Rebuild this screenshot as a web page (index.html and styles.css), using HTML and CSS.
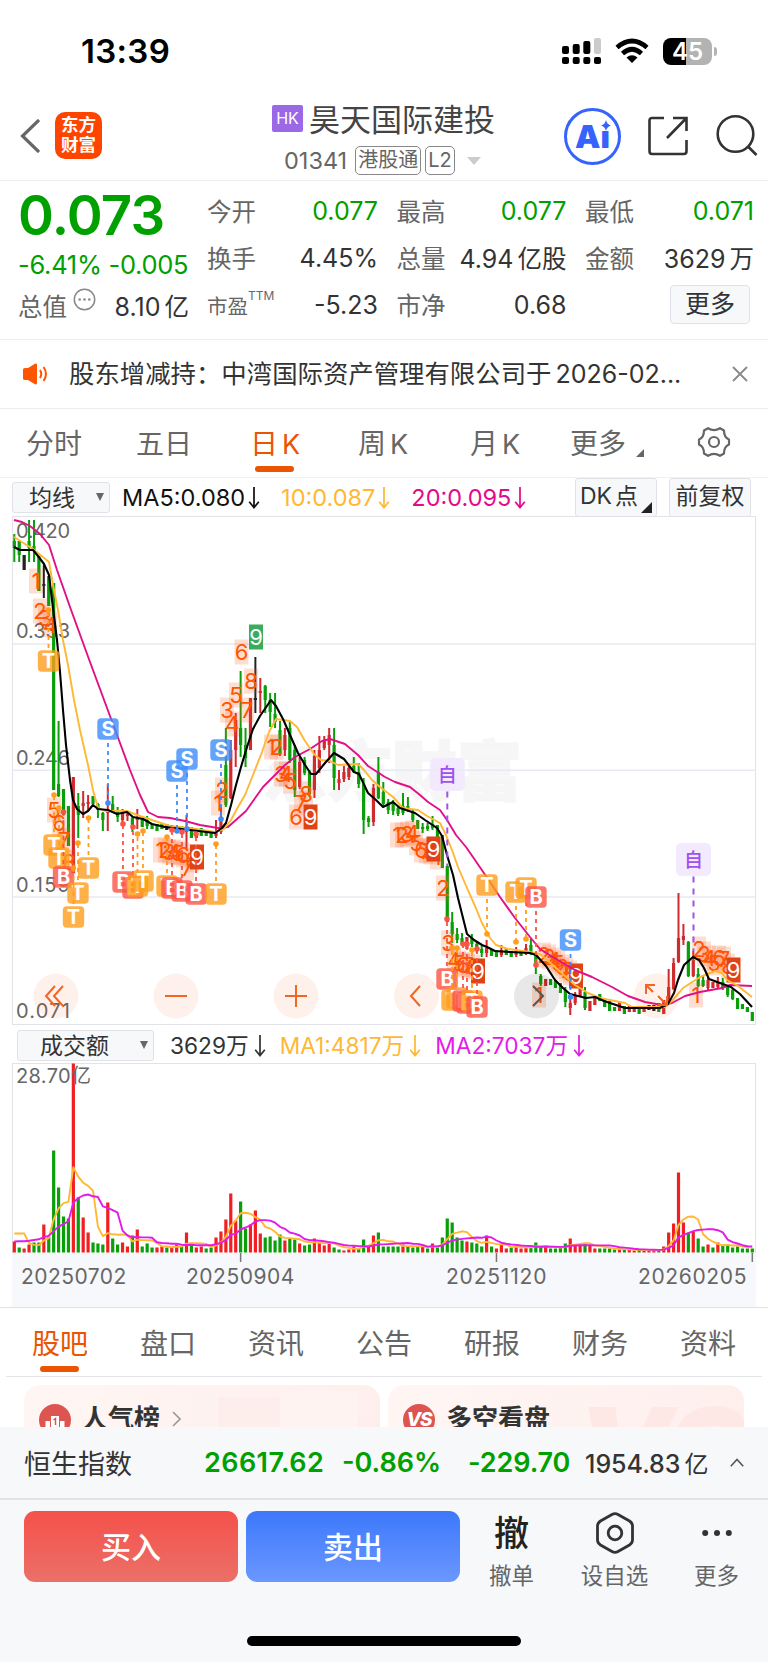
FILE: index.html
```
<!DOCTYPE html>
<html lang="zh-CN">
<head>
  <meta charset="UTF-8" />
  <meta name="viewport" content="width=device-width, initial-scale=1.0"/>
  <title>昊天国际建投 01341</title>
  <link rel="stylesheet" href="styles.css">
</head>
<body>
  <!-- Status bar -->
  <div class="status-bar">
    <div class="clock">13:39</div>
    <div class="status-icons">
      <svg width="39" height="28" viewBox="0 0 39 28">
        <g fill="#000">
          <rect x="0" y="9" width="7" height="8" rx="2"/><rect x="10.7" y="7" width="7" height="10" rx="2"/><rect x="21.3" y="4" width="7" height="13" rx="2"/>
          <rect x="0" y="20" width="7" height="7" rx="2"/><rect x="10.7" y="20" width="7" height="7" rx="2"/><rect x="21.3" y="20" width="7" height="7" rx="2"/><rect x="32" y="20" width="7" height="7" rx="2"/>
        </g>
        <rect x="32" y="1" width="7" height="16" rx="2" fill="#ccc"/>
      </svg>
      <svg width="34" height="26" viewBox="0 0 34 26" fill="none" stroke="#000" stroke-width="4.6">
        <path d="M2 9.500Q17 -3.500 32 9.500"/>
        <path d="M7.500 15.500Q17 7 26.500 15.500"/>
        <path d="M17 25l-5.500-5.500Q17 15 22.500 19.500z" fill="#000" stroke="none"/>
      </svg>
      <div class="battery">45</div>
    </div>
  </div>

  <!-- Header -->
  <div class="header">
    <div class="header-left">
      <svg width="20" height="34" viewBox="0 0 20 34" fill="none" stroke="#666" stroke-width="3.200"><path d="M19 1L2.500 17 19 33"/></svg>
      <div class="logo">东方<br>财富</div>
    </div>
    <div class="title-box">
      <div class="title"><span class="hk">HK</span>昊天国际建投</div>
      <div class="code">01341<span class="tag tag-hk">港股通</span><span class="tag">L2</span><i class="down"></i></div>
    </div>
    <div class="header-right">
      <div class="ai">Ai
        <svg class="spark" width="10" height="11" viewBox="0 0 10 11"><path d="M5 0Q6 4.500 10 5.500 6 6.500 5 11 4 6.500 0 5.500 4 4.500 5 0z" fill="#3563fb"/></svg>
      </div>
      <svg width="42" height="42" viewBox="0 0 42 42" fill="none" stroke="#333" stroke-width="2.600">
        <path d="M17 3H5Q2.500 3 2.500 5.500V36Q2.500 39 5 39H37Q39.500 39 39.500 36V25"/><path d="M26 3H39.500V16M39 3.500L20 23"/>
      </svg>
      <svg width="42" height="42" viewBox="0 0 42 42" fill="none" stroke="#333" stroke-width="2.600"><circle cx="19.500" cy="20" r="17.800"/><path d="M32 32.500L40.500 41"/></svg>
    </div>
  </div>

  <!-- Quote -->
  <div class="quote">
    <div class="price-col">
      <div class="price">0.073</div>
      <div class="change">-6.41% -0.005</div>
      <div class="cap">
        <span class="label">总值</span>
        <svg width="23" height="23" viewBox="0 0 23 23"><circle cx="11.500" cy="11.500" r="10.200" fill="none" stroke="#888" stroke-width="1.500"/><g fill="#888"><circle cx="6.700" cy="11.500" r="1.300"/><circle cx="11.500" cy="11.500" r="1.300"/><circle cx="16.300" cy="11.500" r="1.300"/></g></svg>
        <span class="cap-value">8.10<em>亿</em></span>
      </div>
    </div>
    <div class="stats">
      <div class="stat"><span class="label">今开</span><span class="green">0.077</span></div>
      <div class="stat"><span class="label">最高</span><span class="green">0.077</span></div>
      <div class="stat"><span class="label">最低</span><span class="green">0.071</span></div>
      <div class="stat"><span class="label">换手</span><span>4.45%</span></div>
      <div class="stat"><span class="label">总量</span><span>4.94<em>亿股</em></span></div>
      <div class="stat"><span class="label">金额</span><span>3629<em>万</em></span></div>
      <div class="stat"><span class="label small">市盈<sup>TTM</sup></span><span>-5.23</span></div>
      <div class="stat"><span class="label">市净</span><span>0.68</span></div>
      <div class="stat stat-more"><button class="more-btn">更多</button></div>
    </div>
  </div>

  <!-- Notice -->
  <div class="notice">
    <svg width="27" height="22" viewBox="0 0 27 22"><path d="M1 6.500Q1 5 3 5H6L13 .8Q15 0 15 2V20Q15 22 13 21.200L6 17H3Q1 17 1 15.500z" fill="#ff5500"/><path d="M18 7Q20.500 11 18 15M21.500 4Q26.500 11 21.500 18" fill="none" stroke="#ff5500" stroke-width="2"/></svg>
    <span class="notice-text">股东增减持：中湾国际资产管理有限公司于<b>2026-02...</b></span>
    <svg width="16" height="16" viewBox="0 0 16 16" stroke="#888" stroke-width="1.800"><path d="M1 1L15 15M15 1L1 15"/></svg>
  </div>

  <!-- Period tabs -->
  <div class="period-tabs">
    <span>分时</span><span>五日</span><span class="active">日<b>K</b></span><span>周<b>K</b></span><span>月<b>K</b></span><span class="tab-more">更多</span>
    <svg width="34" height="34" viewBox="0 0 34 34" fill="none" stroke="#666" stroke-width="2.200"><path d="M11 3.200Q17 7 23 3.200L27 5.500Q27 12.500 32 14.500V19.500Q27 21.500 27 28.500L23 30.800Q17 27 11 30.800L7 28.500Q7 21.500 2 19.500V14.500Q7 12.500 7 5.500z" stroke-linejoin="round"/><circle cx="17" cy="17" r="5"/></svg>
  </div>

  <!-- Moving averages -->
  <div class="ma-row">
    <div class="select"><span>均线</span><i></i></div>
    <span class="ma ma5">MA5:0.080</span><svg class="arrow ma5"><use href="#arrow"/></svg>
    <span class="ma ma10">10:0.087</span><svg class="arrow ma10"><use href="#arrow"/></svg>
    <span class="ma ma20">20:0.095</span><svg class="arrow ma20"><use href="#arrow"/></svg>
    <div class="tool-btn dk">DK<span>点</span></div>
    <div class="tool-btn">前复权</div>
  </div>

  <svg class="defs" width="0" height="0"><symbol id="arrow" viewBox="0 0 12 24"><path d="M6 1V22M1 16.500L6 22.500 11 16.500" fill="none" stroke="currentColor" stroke-width="1.800"/></symbol></svg>

  <svg id="kline" class="kline" width="768" height="510" viewBox="0 516 768 510"></svg>

  <div class="vol-row">
    <div class="select wide"><span>成交额</span><i></i></div>
    <span class="vol">3629万</span><svg class="arrow vol"><use href="#arrow"/></svg>
    <span class="vol ma10">MA1:4817万</span><svg class="arrow ma10"><use href="#arrow"/></svg>
    <span class="vol purple">MA2:7037万</span><svg class="arrow purple"><use href="#arrow"/></svg>
  </div>

  <svg id="volume" class="volume" width="768" height="245" viewBox="0 1062 768 245"></svg>

  <!-- Info tabs -->
  <div class="info-tabs">
    <span class="active">股吧</span><span>盘口</span><span>资讯</span><span>公告</span><span>研报</span><span>财务</span><span>资料</span>
  </div>
  <div class="cards">
    <div class="card">
      <svg width="32" height="32" viewBox="0 0 32 32"><circle cx="16" cy="16" r="16" fill="#dc5550"/><path d="M6.500 26V17h4.500v9zM12 26V12h8v14zM21 26v-9h4.500v9z" fill="#fff"/><path d="M14.500 16l2-1.500V21" stroke="#dc5550" stroke-width="1.500" fill="none"/></svg>
      <span>人气榜</span>
      <svg width="9" height="16" viewBox="0 0 9 16" fill="none" stroke="#999" stroke-width="1.600"><path d="M1 1l7 7-7 7"/></svg>
      <div class="deco"><i></i><i></i><i></i></div>
    </div>
    <div class="card">
      <div class="vs">VS</div>
      <span>多空看盘</span>
      <div class="deco-vs">VS</div>
    </div>
  </div>

  <!-- Index bar -->
  <div class="index-bar">
    <span class="index-name">恒生指数</span>
    <span class="index-num">26617.62</span>
    <span class="index-pct">-0.86%</span>
    <span class="index-diff">-229.70</span>
    <span class="index-amt">1954.83<em>亿</em></span>
    <svg width="14" height="9" viewBox="0 0 14 9" fill="none" stroke="#555" stroke-width="1.600"><path d="M.8 8.200L7 1.500l6.200 6.700"/></svg>
  </div>

  <!-- Trade bar -->
  <div class="trade-bar">
    <button class="buy">买入</button>
    <button class="sell">卖出</button>
    <div class="action"><div class="action-icon big">撤</div>撤单</div>
    <div class="action wide"><div class="action-icon"><svg width="40" height="42" viewBox="0 0 40 42" fill="none" stroke="#333" stroke-width="2.800"><path d="M17 2.500Q20 .8 23 2.500L34.500 9Q37.500 11 37.500 14V28Q37.500 31 34.500 33L23 39.500Q20 41.200 17 39.500L5.500 33Q2.500 31 2.500 28V14Q2.500 11 5.500 9z"/><circle cx="20" cy="21" r="6.800"/></svg></div>设自选</div>
    <div class="action"><div class="action-icon"><svg width="30" height="8" viewBox="0 0 30 8" fill="#333"><circle cx="3.200" cy="4" r="3"/><circle cx="15" cy="4" r="3"/><circle cx="26.800" cy="4" r="3"/></svg></div>更多</div>
  </div>
  <div class="home"><i></i></div>

  <script src="chart.js"></script>
</body>
</html>
```
FILE: styles.css
```
:root {
  --green: #00a000;
  --orange: #ea5504;
  --gray: #666;
  --dark: #333;
  --line: #ececee;
  --panel: #f7f8fa;
}

* {
  box-sizing: border-box;
}

body {
  margin: 0;
  width: 768px;
  height: 1663px;
  overflow: hidden;
  background: #fff;
  color: var(--dark);
  font-family: Inter, "Noto Sans CJK SC", sans-serif;
  display: flex;
  flex-direction: column;
}

svg {
  flex: none;
  display: block;
}

i, em {
  font-style: normal;
}

button {
  font-family: inherit;
  border: none;
  padding: 0;
}

.green { color: var(--green); }
.purple { color: #e31bea; }
.defs { position: absolute; }

/* Status bar */
.status-bar {
  height: 96px;
  flex: none;
  display: flex;
  justify-content: space-between;
  padding: 6px 56px 0 81px;
  align-items: center;
}

.clock {
  font-size: 33px;
  font-weight: 600;
  color: #000;
  letter-spacing: 0.3px;
}

.status-icons {
  display: flex;
  align-items: center;
  gap: 14px;
}

.battery {
  position: relative;
  width: 49px;
  height: 27px;
  border-radius: 8px;
  background: linear-gradient(90deg, #000 46%, #b3b3b3 46%);
  color: #fff;
  font-size: 24px;
  font-weight: 600;
  line-height: 27px;
  text-align: center;
}

.battery::after {
  content: "";
  position: absolute;
  right: -5px;
  top: 9px;
  width: 3px;
  height: 9px;
  border-radius: 0 4px 4px 0;
  background: #b3b3b3;
}

/* Header */
.header {
  height: 85px;
  flex: none;
  display: flex;
  border-bottom: 1px solid var(--line);
}

.header-left {
  width: 272px;
  padding: 16px 0 0 20px;
  display: flex;
  gap: 15px;
}

.header-left > svg {
  margin-top: 7px;
}

.logo {
  width: 47px;
  height: 47px;
  border-radius: 10px;
  background: #ff4400;
  color: #fff;
  font-size: 17.5px;
  line-height: 20px;
  padding-top: 3px;
  font-weight: 600;
  text-align: center;
}

.title-box {
  width: 292px;
}

.title {
  display: flex;
  align-items: center;
  gap: 6px;
  height: 42px;
  font-size: 31px;
  color: #444;
}

.hk {
  width: 31px;
  height: 27px;
  margin-top: 3px;
  background: #9b68e6;
  border-radius: 2px;
  color: #fff;
  font-size: 16px;
  line-height: 27px;
  text-align: center;
}

.code {
  display: flex;
  align-items: center;
  margin: 8px 0 0 12px;
  font-size: 23.5px;
  height: 29px;
  color: var(--gray);
}

.tag {
  height: 29px;
  padding: 0 2px;
  margin-left: 4px;
  border: 1.5px solid #888;
  border-radius: 5px;
  font-size: 20px;
  line-height: 26px;
}

.tag-hk {
  margin-left: 8px;
}

.down {
  margin-left: 12px;
  border: 7px solid transparent;
  border-top: 8px solid #ccc;
  border-bottom: 0;
}

.header-right {
  display: flex;
  gap: 26px;
}

.header-right > svg {
  margin-top: 19px;
}

.header-right > svg:last-child {
  margin: 18px 0 0 1px;
}

.ai {
  position: relative;
  width: 57px;
  height: 57px;
  margin: 12px 0 0 0;
  border: 3px solid #3563fb;
  border-radius: 50%;
  color: #3563fb;
  font-size: 32px;
  line-height: 51px;
  font-weight: 900;
  text-align: center;
}

.spark {
  position: absolute;
  left: 34px;
  top: 9px;
  background: #fff;
}

/* Quote */
.quote {
  height: 159px;
  flex: none;
  display: flex;
  padding: 7px 14px 0 18px;
  border-bottom: 1px solid var(--line);
}

.price-col {
  width: 171px;
  margin-right: 18px;
}

.price {
  color: var(--green);
  font-size: 54.5px;
  line-height: 54px;
  font-weight: 600;
  letter-spacing: -0.8px;
}

.change {
  color: var(--green);
  font-size: 25.5px;
  line-height: 46px;
  white-space: nowrap;
  letter-spacing: -0.3px;
}

.cap {
  display: flex;
  align-items: center;
  font-size: 25px;
  height: 34px;
}

.cap > svg {
  margin: -12px 0 0 6px;
}

.cap-value {
  margin-left: auto;
  font-size: 25px;
}

.cap-value em, .stat em {
  margin-left: 4px;
  font-size: 24.5px;
}

.label {
  color: var(--gray);
  font-size: 24.5px;
}

.label.small {
  font-size: 20.5px;
}

.label sup {
  font-size: 12px;
  line-height: 0;
  vertical-align: 14px;
}

.stats {
  flex: 1;
  display: grid;
  grid-template-columns: 171px 170px 169px;
  grid-template-rows: 47px 47px 47px;
  column-gap: 18.5px;
  margin-top: -1px;
}

.stat {
  display: flex;
  justify-content: space-between;
  align-items: center;
  font-size: 25px;
  white-space: nowrap;
}

.stat-more {
  justify-content: flex-end;
  padding-right: 4px;
}

.more-btn {
  width: 80px;
  height: 39px;
  margin-top: -1px;
  border: 1.5px solid #dfe2e8;
  border-radius: 4px;
  background: var(--panel);
  color: var(--dark);
  font-size: 25px;
  line-height: 34px;
}

/* Notice */
.notice {
  height: 69px;
  flex: none;
  display: flex;
  align-items: center;
  padding: 0 20px 0 22px;
  border-bottom: 1px solid var(--line);
}

.notice-text {
  flex: 1;
  margin: -4px 0 0 20px;
  font-size: 25.4px;
  white-space: nowrap;
}

.notice-text b {
  font-weight: 400;
  font-size: 25px;
  margin-left: 4px;
}

/* Period tabs */
.period-tabs {
  height: 69px;
  flex: none;
  position: relative;
  display: flex;
  align-items: center;
  padding: 0 0 3px 26px;
  border-bottom: 1px solid #f1f1f3;
  font-size: 28px;
  color: var(--gray);
}

.period-tabs span {
  width: 112px;
  position: relative;
  white-space: nowrap;
}

.period-tabs span:nth-child(1) { width: 110px; }
.period-tabs span:nth-child(2) { width: 114px; }
.period-tabs span:nth-child(3) { width: 108px; }
.period-tabs span:nth-child(5) { width: 100px; }
.period-tabs span.tab-more { width: 127px; }

.period-tabs b {
  font-weight: 400;
  font-size: 27px;
  margin-left: 4px;
}

.active {
  color: var(--orange);
}

.period-tabs .active::after,
.info-tabs .active::after {
  content: "";
  position: absolute;
  left: 5px;
  bottom: -10px;
  width: 39px;
  height: 6px;
  border-radius: 3px;
  background: var(--orange);
}

.tab-more::after {
  content: "";
  position: absolute;
  left: 66px;
  bottom: 5px;
  border-left: 8px solid transparent;
  border-bottom: 8px solid #666;
}

/* Rows over the charts */
.ma-row {
  height: 38px;
  flex: none;
  display: flex;
  align-items: center;
  padding: 0 0 0 12px;
}

.select {
  width: 98px;
  height: 31px;
  border: 1.5px solid #e0e2e8;
  border-radius: 3px;
  background: var(--panel);
  display: flex;
  align-items: center;
  justify-content: space-between;
  padding: 0 5px 0 16px;
  font-size: 23px;
}

.select span {
  margin-top: -2px;
}

.select i {
  border: 4.500px solid transparent;
  border-top: 8px solid #666;
  border-bottom: 0;
}

.select.wide {
  width: 137px;
  padding-left: 22px;
}

.ma {
  font-size: 23.5px;
  margin-left: 21px;
}

.ma:first-of-type { margin-left: 12px; }

.arrow {
  width: 12px;
  height: 23px;
  margin-left: 3px;
}

.ma5 { color: #111; }
.ma10 { color: #ffb833; }
.ma20 { color: #e5098c; }

.tool-btn {
  width: 82px;
  height: 39px;
  border: 1.5px solid #e0e2e8;
  border-radius: 3px;
  background: var(--panel);
  font-size: 23px;
  line-height: 35px;
  text-align: center;
  white-space: nowrap;
  margin-left: 12px;
}

.dk {
  position: relative;
  margin-left: auto;
  text-align: left;
  padding-left: 4px;
}

.dk + .tool-btn { margin-right: 17px; }
.dk span { margin-left: 3px; }

.dk::after {
  content: "";
  position: absolute;
  right: 4px;
  bottom: 3px;
  border-left: 11px solid transparent;
  border-bottom: 11px solid #222;
}

.vol-row {
  height: 36px;
  flex: none;
  display: flex;
  align-items: center;
  padding: 2px 0 0 17px;
}

.vol {
  font-size: 22.7px;
}

span.vol { margin: -2px 0 0 14px; }
.select + span.vol { margin-left: 16px; }
.vol-row .arrow { margin-left: 5px; }

/* Charts */
.kline text, .volume text { font-size: 20px; fill: #666; }
.kline .watermark { font-size: 65px; font-weight: 900; fill: #f6f6f7; stroke: #f6f6f7; stroke-width: 1.500px; }
.kline .count { font-size: 22px; fill: #ff5500; text-anchor: middle; }
.kline .count.end { fill: #fff; }
.kline .badge { font-size: 20px; font-weight: 700; fill: #fff; text-anchor: middle; }
.kline .self { font-size: 19px; font-weight: 500; fill: #a050ee; text-anchor: middle; }
.volume .date { font-size: 21px; letter-spacing: 0.6px; }

/* Info tabs */
.info-tabs {
  height: 70px;
  flex: none;
  display: flex;
  justify-content: space-between;
  align-items: center;
  padding: 0 26px;
  margin: 0 6px;
  border-bottom: 1.5px solid #e4e4e6;
  font-size: 28px;
  color: var(--gray);
  position: relative;
}

.info-tabs::before {
  content: "";
  position: absolute;
  top: 0;
  left: -6px;
  right: -6px;
  border-top: 1.5px solid #e2e2e5;
}

.info-tabs span { position: relative; }
.info-tabs .active::after { left: 8px; bottom: -10px; }

.cards {
  height: 50px;
  flex: none;
  overflow: hidden;
  display: flex;
  gap: 8px;
  padding: 8px 24px 0;
}

.card {
  position: relative;
  flex: 1;
  height: 90px;
  border-radius: 16px;
  overflow: hidden;
  background: linear-gradient(90deg, #fff6f3, #feefed);
  display: flex;
  align-items: flex-start;
  padding: 19px 0 0 15px;
  font-size: 26px;
  font-weight: 700;
  line-height: 32px;
}

.card > span { margin: -1px 12px 0 11px; }
.card > svg:nth-of-type(2) { margin-top: 7px; }

.vs {
  width: 32px;
  height: 32px;
  border-radius: 50%;
  background: #dc5550;
  color: #fff;
  font-size: 19px;
  font-weight: 800;
  font-style: italic;
  letter-spacing: -1px;
  text-align: center;
}

.deco {
  position: absolute;
  right: 0;
  top: 6px;
  display: flex;
  align-items: flex-start;
}

.deco i { width: 62px; height: 90px; background: #fdeeeb; margin-top: 6px; }
.deco i:nth-child(2) { width: 78px; border: 15px solid #fff3f1; background: #fde1de; margin-top: 0; border-top-width: 38px; }
.deco i:nth-child(3) { width: 22px; margin-top: 26px; opacity: 0.4; }

.deco-vs {
  position: absolute;
  right: 4px;
  top: 50px;
  font-size: 120px;
  font-weight: 900;
  font-style: italic;
  color: #fde8e5;
  letter-spacing: -6px;
}

/* Index bar */
.index-bar {
  height: 73px;
  flex: none;
  display: flex;
  align-items: center;
  padding: 0 24px;
  background: var(--panel);
  border-bottom: 2px solid #e2e3e6;
  font-size: 27px;
  font-weight: 600;
  color: var(--green);
  white-space: nowrap;
}

.index-name { font-weight: 400; font-size: 27px; color: var(--dark); width: 180px; }
.index-num { width: 138px; letter-spacing: 0.4px; }
.index-pct { width: 126px; }
.index-diff { width: 117px; letter-spacing: -0.1px; }
.index-amt { color: var(--dark); font-size: 25px; flex: 1; font-weight: 500; }
.index-amt em { margin-left: 4px; font-weight: 400; font-size: 24px; }

/* Trade bar */
.trade-bar {
  height: 118px;
  flex: none;
  display: flex;
  padding: 11px 0 0 24px;
  background: var(--panel);
}

.buy, .sell {
  width: 214px;
  height: 71px;
  margin-right: 8px;
  padding-bottom: 4px;
  border-radius: 11px;
  background: linear-gradient(#f4514a, #eb7069);
  color: #fff;
  font-size: 30px;
  font-weight: 500;
}

.sell { background: linear-gradient(#3d78fa, #6b97ff); }

.action {
  width: 87px;
  text-align: center;
  color: var(--gray);
  font-size: 22.5px;
  line-height: 36px;
}

.action.wide { width: 119px; }
.action:last-child { width: 85px; }

.action-icon {
  height: 47px;
  padding-bottom: 4px;
  display: flex;
  align-items: center;
  justify-content: center;
}

.action-icon.big {
  font-size: 35px;
  font-weight: 500;
  color: #222;
}

.home {
  height: 44px;
  flex: none;
  background: var(--panel);
  display: flex;
  justify-content: center;
  padding-top: 18px;
}

.home i {
  width: 274px;
  height: 10px;
  border-radius: 5px;
  background: #000;
}
```
FILE: chart.js
```
const STEP = 4.92;
const X0 = 14.3;
const xOf = i => X0 + i * STEP;
const COLORS = { r: '#cf2a2e', g: '#0a9e0a', k: '#222' };

// colour, high, low and (when the wick is visible) body top, body bottom
const candles = `g534,562,541,548 g541,562,541,555 k555,570 g520,562,541,548 g520,562,546,550 g556,591 k565,598,584,586 g576,606
g583,790 g721,797,784,796 g789,815 g806,846 r777,873 g793,838,806,815 r791,818,803,806 r795,811,802,804 g796,804 g803,818,804,810
g812,831,813,820 r784,831,810,813 g796,813,804,812 g807,822,811,817 r809,826,811,820 r812,821,814,816 g817,832,818,826 r809,829,817,820 g818,827 g816,829,820,826
g824,829 g824,831 g823,829 k824,830 g825,831 r826,833 g826,832 r815,850,828,832 g827,838 r829,838 g828,836 g832,836 g832,838 r820,838,832,836
r806,834,820,832 g728,807,765,805 r740,799,750,798 r713,767,720,750 g671,757,728,745 g728,767,745,758 r698,750 k657,713,698,700 r678,713,691,693
g685,713,686,700 g693,727,700,712 g693,728,714,722 g721,756,730,754 r728,756,735,750 g722,763,728,760 g745,797,750,790 r757,789,762,787 g757,775,760,773
g770,797,772,794 r750,798,756,790 r736,773,750,768 r736,750,740,748 r728,763,735,745 g728,790,745,778 r770,790,779,783 r766,782,772,779 r764,780,768,777
g757,773,766,772 g763,788,772,784 g778,834,784,820 g816,827,818,822 r784,826,788,822 g757,799,772,798 g782,807,792,804 g799,814,802,810 g800,815,804,811
g806,816,808,814 g793,815,806,813 g797,812,806,811 g810,822,812,820 g820,829 g823,833,827,829 g823,831,826,829 g816,830,824,828 g825,853 g835,868
g866,922 g912,943,922,934 g928,943,934,940 g933,946,938,944 r937,949 g934,947,938,944 g942,953,944,949 g946,957,949,953 r940,957,948,953 g949,956 g950,957 r945,957,950,955
g949,955 g951,957 r947,957,951,955 g950,956 r944,955,948,954 g939,955,945,953 g953,974,955,966 g974,986,976,984 r979,986 g979,985 g980,988 g983,993 g987,1007,990,1002
r998,1015,1003,1008 r992,1005,996,1003 r987,997 g987,1010,992,1008 r1001,1011 r997,1005 g994,1001 g999,1007 g1001,1011 g1007,1011 r1002,1011 g1006,1014 r1006,1012 r1007,1012
g1007,1014 r1006,1012 k1005,1010 k1005,1011 g1003,1012 r1000,1014 r969,1005,987,1004 r958,990,963,989 r893,963,938,962 r924,945,936,940 g941,977,942,976 r951,977,960,976
g968,987,974,986 g975,987,980,986 r977,990,980,988 r982,988 r977,988,982,987 g978,990,982,988 g985,997,987,995 g988,1000,990,999 g998,1009 g1004,1009 g1007,1012 g1012,1021`.split(/\s+/);

const volumes = `r11 g5 r4 r8 g10 g10 r28 g16 g102 g65 g36 g34 r189 g55 r35 r20 g10 g9 g8 r50 g14 g8 r10 r6 g17 r23 g6 g9 g5 r5 r6 g5 r5 r8 g6 r20 g8 r5 r6 g4 g5
r15 r21 r33 r59 r32 g51 g24 r28 r42 r19 g15 g16 g12 g18 r12 g14 g13 r9 g7 g8 r14 r10 r7 r10 g5 g3 r2 r3 r6 g4 g13 r7 r17 g20 g6 g6 g6 g6 r8 g6 g5
g6 r6 g4 r9 g5 g15 g34 g30 g15 g12 r11 g10 g9 g6 r17 g6 r4 r8 r4 g5 r7 r4 r5 g5 g10 g6 r6 g4 g4 g5 g9 r14 r7 r8 g9 r7 r4 g4 g4 g4 g3 r3 g3 r3 r2 g3
r2 r2 r2 g3 r6 r20 r29 r80 r30 g20 r21 g14 g6 r8 g5 r10 g7 g8 g5 g6 g4 g4 g4`.split(/\s+/);

const ma5 = '14,547 20,550 33,550 38,556 44,564 49,575 52,600 57,640 60,672 63,710 66,745 70,780 73,800 77,809 83,814 88,811 93,805 98,809 108,810 117,814 127,812 133,817 143,819 152,824 165,827 190,830 215,833 222,828 226,823 231,805 236,785 241,767 247,747 253,729 260,716 271,700 276,706 283,719 290,735 298,753 305,765 311,774 316,774 325,763 334,753 344,759 354,772 359,774 368,793 376,800 383,807 393,802 400,808 415,813 425,820 437,828 442,836 447,855 453,875 458,898 463,918 467,934 474,940 482,945 487,947 495,951 510,952 530,953 536,955 546,966 555,980 563,988 570,994 578,996 586,998 595,997 604,1001 613,1004 625,1008 640,1008 660,1008 668,1004 674,993 678,980 684,965 693,957 699,960 704,968 709,979 720,983 731,987 740,994 752,1007';
const ma10 = '14,537 33,549 49,562 53,585 58,610 63,640 68,665 74,700 80,730 88,765 93,790 98,808 105,811 127,811 137,815 152,820 170,826 190,828 215,832 224,829 231,820 238,807 245,795 253,775 262,752 269,732 276,719 290,721 297,727 305,741 314,754 321,760 330,761 338,765 358,764 364,770 372,780 380,787 393,797 403,808 418,810 427,816 440,823 446,835 452,850 458,867 467,888 475,906 482,923 490,938 496,945 508,949 530,952 540,954 547,960 556,968 575,985 588,993 600,998 615,1001 625,1003 632,1007 665,1007 672,1001 683,988 700,977 715,971 722,973 727,980 738,986 752,997';
const ma20 = '14,520 22,522 30,526 40,534 49,545 57,570 70,607 90,662 110,716 130,770 140,795 148,812 158,817 170,818 185,821 200,825 218,828 228,827 246,811 263,787 285,765 295,757 310,749 322,741 330,739 345,744 358,755 368,766 385,777 395,782 410,787 420,795 428,802 440,810 447,820 456,835 466,847 475,860 490,882 500,897 515,918 530,937 540,949 551,956 575,970 592,977 612,987 628,996 645,1002 662,1005 672,1003 685,996 700,992 722,988 730,985 752,986';

// Nine-turn counters: digit, x, y
const counts = [
  [1,36,581],[2,40,611],[3,45,618],[4,50,625],[5,54,810],[6,59,823],[7,64,840],[8,69,862],
  [1,160,850],[2,165,850],[3,169,852],[4,174,852],[5,178,853],[6,183,855],[7,187,868],[8,192,860],[9,197,857,'r'],
  [1,218,803],[2,222,790],[3,227,710],[4,232,724],[5,236,695],[6,241.500,652],[7,247,710],[8,251,681],[9,256,637,'g'],
  [1,271,747],[2,276.500,747],[3,281,774],[4,286,774],[5,290,781],[6,296,817],[7,301,803],[8,306,794],[9,310.500,817,'r'],
  [1,397,835],[2,402,835],[3,407,834],[4,412,833],[5,416,843],[6,421,850],[7,426,851],[8,430,852],[1,437,857],[9,433.500,849,'r'],
  [2,443,888],[3,448,943],[4,454,960],[5,459,963],[6,463,965],[7,468,965],[8,473,967],[9,478,971,'r'],
  [1,539,995],[2,544,955],[3,549,957],[4,554,960],[5,558,963],[6,562,967],[7,566,970],[8,570,973],[9,576,976,'r'],
  [1,696,995],[2,699,949],[3,704,954],[4,709,958],[5,714,963],[6,719,958],[7,724,959],[8,728,966],[9,733.500,970,'r']
];

// Trade badges: letter, x, y, y of the dot on the candle
const badges = [
  ['T',48.500,661,610],['S',108,729,803],['S',177,771,831],['S',187,759,829],['S',221,750,819],
  ['T',54,845,795],['T',59,858,808],['B',63.500,877,812],['T',88.500,868,818],['T',78,893,843],['T',73.500,917,868],
  ['B',123,882,824],['B',133,888,827],['T',137.500,886,834],['T',143,881,831],
  ['T',167,886,837],['B',172,888,830],['B',182,891,832],['B',196,894,834],['T',216,894,844],
  ['T',487,885,934],['T',516,892,942],['T',526,888,939],['B',536,897,965],['S',570.500,940,997],
  ['B',447,979,919],['T',452,1000,948],['T',457,998,948],['B',463,1001,944],['B',467,1003,944],['T',472,1001,950],['B',477,1007,949]
];
const BADGE = { T: '#ff9d1c', B: '#fb5345', S: '#3d8cfb' };

function curve(points, color, width = 1.9) {
  return `<polyline points="${points}" fill="none" stroke="${color}" stroke-width="${width}" stroke-linejoin="round"/>`;
}

function drawKline() {
  let s = '<text class="watermark" x="262" y="795">东方财富</text>';
  s += '<rect x="12.500" y="516.500" width="743" height="508" fill="none" stroke="#e2e3e9"/>';
  [644, 770.3, 897].forEach(y => { s += `<path d="M13 ${y}H755" stroke="#e6eaf1" stroke-width="1.500"/>`; });
  ['0.420,531', '0.333,631', '0.246,757.500', '0.159,884.500', '0.071,1011'].forEach(l => {
    const [t, y] = l.split(',');
    s += `<text x="16" y="${+y + 7}" textLength="54">${t}</text>`;
  });

  candles.forEach((c, i) => {
    const color = COLORS[c[0]];
    const [hi, lo, top = hi, bottom = lo] = c.slice(1).split(',').map(Number);
    const x = xOf(i);
    s += `<path d="M${x} ${hi}V${lo}" stroke="${color}" stroke-width="2"/>`;
    s += `<path d="M${x} ${top}V${bottom}" stroke="${color}" stroke-width="3.200"/>`;
  });

  counts.forEach(([n, x, y, end]) => {
    const fill = end === 'r' ? '#e04416' : end === 'g' ? '#3bab5c' : '#ff5a1e';
    s += `<rect x="${x - 7}" y="${y - 12.500}" width="14" height="25" fill="${fill}" fill-opacity="${end ? 1 : 0.2}"/>`;
    s += `<text class="count ${end ? 'end' : ''}" x="${x}" y="${y + 8}">${n}</text>`;
  });

  s += curve(ma20, '#e01187') + curve(ma10, '#ffb833') + curve(ma5, '#000', 2.1);

  badges.forEach(([t, x, y, dot]) => {
    const edge = dot < y ? y - 13 : y + 14;
    s += `<path d="M${x} ${edge}V${dot}" stroke="${BADGE[t]}" stroke-width="1.800" stroke-dasharray="4 4"/>`;
    s += `<circle cx="${x}" cy="${dot}" r="2.800" fill="${BADGE[t]}"/>`;
    s += `<rect x="${x - 10.700}" y="${y - 10.700}" width="21.400" height="21.400" rx="4" fill="${BADGE[t]}" fill-opacity=".8"/>`;
    s += `<text class="badge" x="${x}" y="${y + 7.200}">${t}</text>`;
  });

  [[447.3, 774.5, 866], [693.5, 859.5, 951]].forEach(([x, y, end]) => {
    s += `<rect x="${x - 17.500}" y="${y - 16.500}" width="35" height="33" rx="5" fill="#f1e6fd" fill-opacity=".85"/>`;
    s += `<text class="self" x="${x}" y="${y + 7.500}">自</text>`;
    s += `<path d="M${x} ${y + 17}V${end}" stroke="#a050ee" stroke-width="2" stroke-dasharray="6 6"/>`;
  });

  // Round control buttons
  const icons = {
    56: 'M55 986L46 996 55 1006M63 986L54 996 63 1006',
    176: 'M165 996H187',
    296: 'M285 996H307M296 985V1007',
    416.5: 'M420 986L411 996 420 1006',
    536.5: 'M533 986L543 996 533 1006',
    656.5: 'M646 994V985H655M646 985L653 992M667 996V1005H658M667 1005L658 996'
  };
  Object.entries(icons).forEach(([x, d]) => {
    const gray = x === '536.5';
    s += `<circle cx="${x}" cy="996" r="22.500" fill="${gray ? '#000' : '#f05a1e'}" fill-opacity=".09"/>`;
    s += `<path d="${d}" fill="none" stroke="${gray ? '#555' : '#f26522'}" stroke-width="2"/>`;
  });
  document.getElementById('kline').innerHTML = s;
}

function average(list, n) {
  // turnover of the days before the first visible bar
  const all = [3, 3, 3, 3, 3, 5, 4, 55, 20].concat(list);
  return list.map((v, i) => {
    const sum = all.slice(i + 10 - n, i + 10).reduce((a, b) => a + b, 0);
    return `${xOf(i)},${1252.5 - sum / n}`;
  }).join(' ');
}

function drawVolume() {
  let s = '<rect x="12" y="1253" width="744" height="54" fill="#f7f8fb"/>';
  s += '<path d="M12.500 1253V1063.500H755.500V1253" fill="none" stroke="#e2e3e9"/>';
  volumes.forEach((v, i) => {
    const h = +v.slice(1);
    s += `<rect x="${xOf(i) - 1.600}" y="${1252.500 - h}" width="3.200" height="${h}" fill="${v[0] === 'r' ? '#f01f22' : '#0a9e0a'}"/>`;
  });
  const values = volumes.map(v => +v.slice(1));
  s += curve(average(values, 5), '#ffb833') + curve(average(values, 10), '#e31bea');
  [46, 98, 150].forEach(i => { s += `<path d="M${xOf(i)} 1253V1262" stroke="#777" stroke-width="1.500"/>`; });
  s += '<text x="16" y="1083" textLength="75">28.70亿</text>';
  [['20250702', 21, 106], ['20250904', 186, 109], ['20251120', 446, 101], ['20260205', 638, 109]].forEach(([d, x, w]) => {
    s += `<text class="date" x="${x}" y="1284" textLength="${w}">${d}</text>`;
  });
  document.getElementById('volume').innerHTML = s;
}

drawKline();
drawVolume();
```
